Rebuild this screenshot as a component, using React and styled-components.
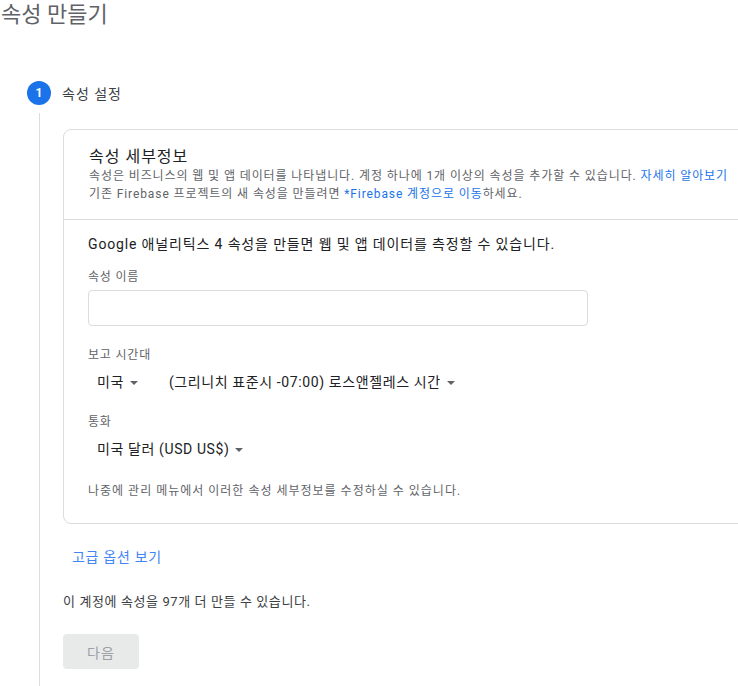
import React from "react"
import styled, { createGlobalStyle } from "styled-components"

const GlobalStyle = createGlobalStyle`
  body {
    margin: 0;
    overflow: hidden;
    background: #fff;
    font-family: Roboto, "Noto Sans CJK KR", sans-serif;
    color: #3c4043;
  }
`

function App() {
  return (
    <Page>
      <GlobalStyle />
      <Title>속성 만들기</Title>
      <StepHead>
        <StepNum>1</StepNum>
        <StepName>속성 설정</StepName>
      </StepHead>
      <StepBody>
        <Card>
          <CardHead>
            <CardTitle>속성 세부정보</CardTitle>
            <Desc>
              속성은 비즈니스의 웹 및 앱 데이터를 나타냅니다. 계정 하나에 1개 이상의 속성을 추가할 수 있습니다.{" "}
              <Link>자세히 알아보기</Link>
            </Desc>
            <Desc>
              기존 Firebase 프로젝트의 새 속성을 만들려면 <Link>*Firebase 계정으로 이동</Link>하세요.
            </Desc>
          </CardHead>
          <CardBody>
            <Intro>Google 애널리틱스 4 속성을 만들면 웹 및 앱 데이터를 측정할 수 있습니다.</Intro>
            <Label $top={15}>속성 이름</Label>
            <Input />
            <Label $top={21}>보고 시간대</Label>
            <SelectRow>
              <Select>
                미국 <Caret />
              </Select>
              <Select>
                (그리니치 표준시 -07:00) 로스앤젤레스 시간 <Caret />
              </Select>
            </SelectRow>
            <Label $top={22}>통화</Label>
            <SelectRow>
              <Select>
                미국 달러 (USD US$) <Caret />
              </Select>
            </SelectRow>
            <Note>나중에 관리 메뉴에서 이러한 속성 세부정보를 수정하실 수 있습니다.</Note>
          </CardBody>
        </Card>
        <MoreLink>고급 옵션 보기</MoreLink>
        <Quota>이 계정에 속성을 97개 더 만들 수 있습니다.</Quota>
        <NextButton disabled>다음</NextButton>
      </StepBody>
    </Page>
  )
}

const Page = styled.div`
  width: 738px;
  min-height: 686px;
`
const Title = styled.h1`
  margin: 0;
  padding-left: 1px;
  font-size: 22px;
  font-weight: 400;
  line-height: 30px;
  color: #5f6368;
`
const StepHead = styled.div`
  display: flex;
  align-items: center;
  gap: 11px;
  padding: 51px 0 0 27px;
`
const StepNum = styled.div`
  width: 24px;
  height: 24px;
  border-radius: 50%;
  background: #1a73e8;
  color: #fff;
  font-size: 12px;
  font-weight: 700;
  display: flex;
  align-items: center;
  justify-content: center;
`
const StepName = styled.div`
  font-size: 14px;
  letter-spacing: 1px;
  color: #3c4043;
`
const StepBody = styled.div`
  margin: 8px 0 0 39px;
  padding: 16px 0 16px 23px;
  border-left: 1px solid #dadce0;
  min-height: 560px;
`
const Card = styled.div`
  width: 720px;
  border: 1px solid #dadce0;
  border-radius: 8px;
`
const CardHead = styled.div`
  padding: 17px 25px 16px;
  border-bottom: 1px solid #dadce0;
`
const CardTitle = styled.div`
  font-size: 16px;
  line-height: 20px;
  letter-spacing: 1px;
  color: #202124;
`
const Desc = styled.div`
  font-size: 12px;
  line-height: 18px;
  letter-spacing: 0.9px;
  color: #5f6368;
  white-space: nowrap;
`
const Link = styled.span`
  color: #1a73e8;
  cursor: pointer;
`
const CardBody = styled.div`
  padding: 14px 25px 24px 24px;
`
const Intro = styled.div`
  font-size: 14px;
  line-height: 20px;
  letter-spacing: 0.85px;
  color: #202124;
`
const Label = styled.div`
  margin-top: ${(p) => p.$top}px;
  font-size: 12px;
  line-height: 16px;
  letter-spacing: 0.8px;
  color: #5f6368;
`
const Input = styled.input`
  display: block;
  box-sizing: border-box;
  margin-top: 5px;
  width: 500px;
  height: 36px;
  border: 1px solid #dadce0;
  border-radius: 4px;
  outline: none;
`
const SelectRow = styled.div`
  display: flex;
  gap: 31px;
  margin-top: 9px;
  padding-left: 9px;
`
const Select = styled.div`
  display: flex;
  align-items: center;
  gap: 6px;
  font-size: 14px;
  line-height: 20px;
  letter-spacing: 0.6px;
  color: #202124;
  cursor: pointer;
`
const Caret = styled.span`
  width: 0;
  height: 0;
  border-left: 4px solid transparent;
  border-right: 4px solid transparent;
  border-top: 4px solid #5f6368;
  margin-top: 1px;
`
const Note = styled.div`
  margin-top: 24px;
  font-size: 12px;
  line-height: 16px;
  letter-spacing: 1px;
  color: #5f6368;
`
const MoreLink = styled.div`
  margin: 23px 0 0 9px;
  font-size: 14px;
  line-height: 20px;
  letter-spacing: 0.7px;
  color: #4285f4;
  cursor: pointer;
`
const Quota = styled.div`
  margin-top: 26px;
  font-size: 13px;
  line-height: 18px;
  letter-spacing: 0.6px;
  color: #3c4043;
`
const NextButton = styled.button`
  display: block;
  margin-top: 23px;
  width: 76px;
  height: 35px;
  border: none;
  border-radius: 4px;
  background: #e8eaea;
  color: #9aa0a6;
  font-family: inherit;
  font-size: 14px;
  letter-spacing: 1px;
`

export default App
